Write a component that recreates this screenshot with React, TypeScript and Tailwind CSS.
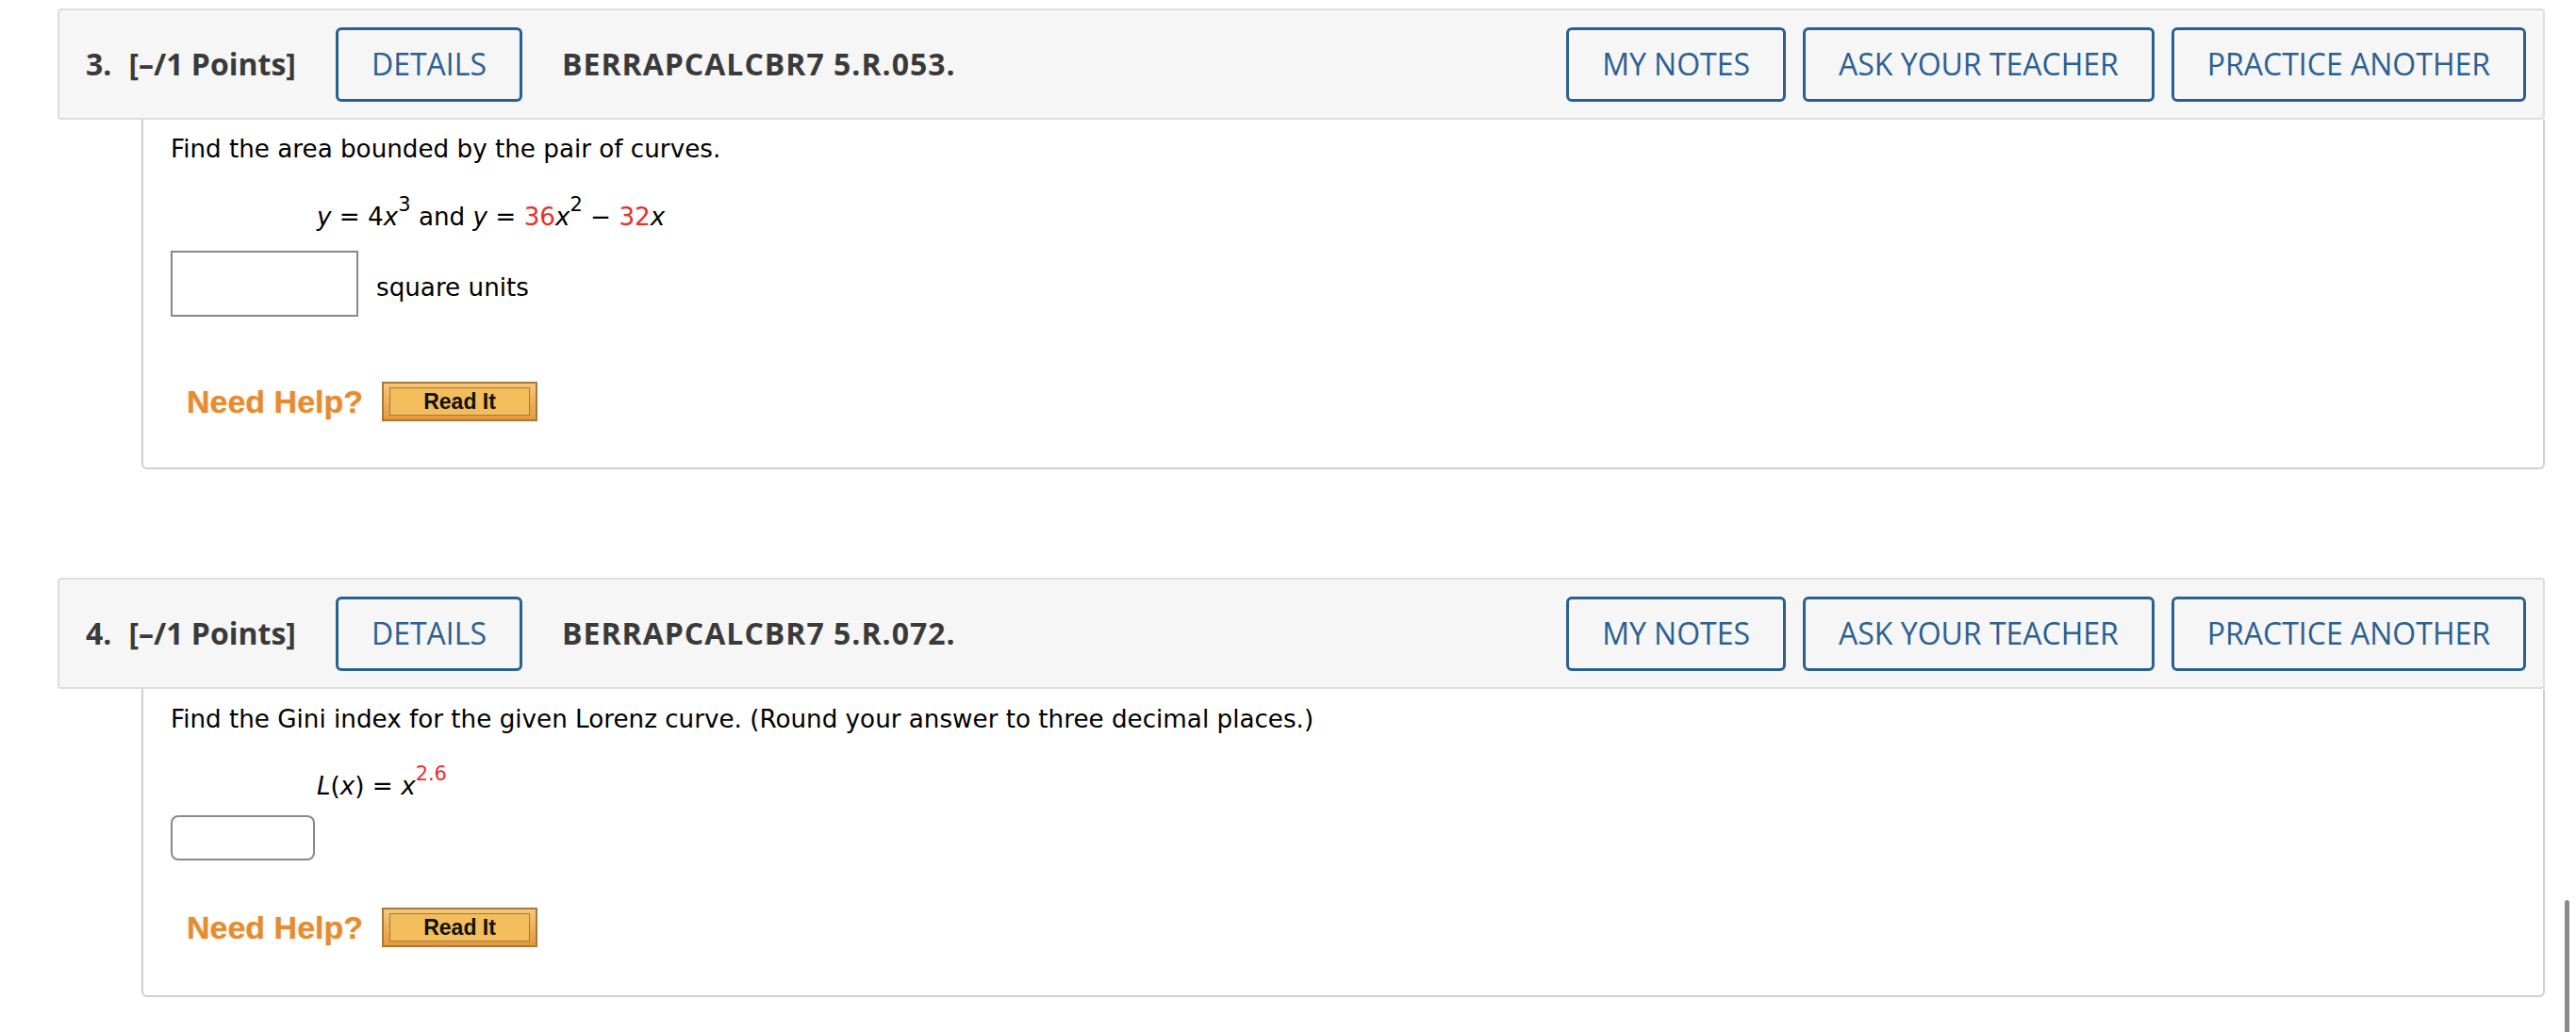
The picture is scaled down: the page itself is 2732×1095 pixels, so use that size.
import React from 'react';

const RED = 'text-[#e8302a]';

function HeaderButton({ label }: { label: string }) {
  return (
    <div className="flex h-[79px] items-center rounded-[6px] border-[3px] border-[#2b6093] bg-[#f6f6f6] px-[35px] text-[32px] leading-none text-[#2b6093]">
      {label}
    </div>
  );
}

function QuestionHeader({ num, code }: { num: string; code: string }) {
  return (
    <div className="flex h-[118px] items-center rounded-[4px] border-2 border-[#dedede] bg-[#f6f6f6] pl-[28px] pr-[18px] font-['Open_Sans',sans-serif] text-[#3a3a3a]">
      <span className="text-[32px] font-bold">{num}</span>
      <span className="ml-[18px] text-[32px] font-bold">[–/1 Points]</span>
      <div className="ml-[42px]">
        <HeaderButton label="DETAILS" />
      </div>
      <span className="ml-[42px] text-[32px] font-bold tracking-[1px]">{code}</span>
      <div className="ml-auto flex gap-[18px]">
        <HeaderButton label="MY NOTES" />
        <HeaderButton label="ASK YOUR TEACHER" />
        <HeaderButton label="PRACTICE ANOTHER" />
      </div>
    </div>
  );
}

function ReadIt() {
  return (
    <div className="h-[42px] w-[165px] border-2 border-[#a8773a] bg-gradient-to-b from-[#f6c77a] to-[#e49a3c] px-[6px] py-[4px]">
      <div className="flex h-full items-center justify-center border border-[#9c7a4a] bg-[#f3bd5c] font-['Liberation_Sans',Arial,sans-serif] text-[23px] font-bold text-[#111]">
        Read It
      </div>
    </div>
  );
}

function NeedHelp() {
  return (
    <div className="flex items-center pl-[17px]">
      <span className="font-['Liberation_Sans',Arial,sans-serif] text-[34px] font-bold text-[#e58c2f] [text-shadow:0_0_2px_rgba(229,140,47,0.5)]">
        Need Help?
      </span>
      <div className="ml-[20px]">
        <ReadIt />
      </div>
    </div>
  );
}

function V({ children }: { children: React.ReactNode }) {
  return <i>{children}</i>;
}

export default function App() {
  return (
    <div className="relative h-[1095px] w-[2732px] overflow-hidden bg-white font-['DejaVu_Sans',Verdana,sans-serif] text-[26.2px] leading-[32px] text-black">
      <div className="ml-[61px] mr-[33px] pt-[9px]">
        {/* question 3 */}
        <QuestionHeader num="3." code="BERRAPCALCBR7 5.R.053." />
        <div className="ml-[89px] rounded-b-[6px] border-x-2 border-b-2 border-[#cfcfcf] pl-[29px] pt-[15px] pb-[49px]">
          <p>Find the area bounded by the pair of curves.</p>
          <p className="mt-[40px] pl-[155px]">
            <V>y</V> = 4<V>x</V>
            <sup className="top-[-0.7em] text-[80%]">3</sup> and <V>y</V> = <span className={RED}>36</span>
            <V>x</V>
            <sup className="top-[-0.7em] text-[80%]">2</sup> − <span className={RED}>32</span>
            <V>x</V>
          </p>
          <div className="mt-[20px] flex items-start">
            <div className="h-[70px] w-[199px] border-2 border-[#888]" />
            <span className="ml-[19px] mt-[23px]">square units</span>
          </div>
          <div className="mt-[69px]">
            <NeedHelp />
          </div>
        </div>

        {/* question 4 */}
        <div className="mt-[115px]">
          <QuestionHeader num="4." code="BERRAPCALCBR7 5.R.072." />
        </div>
        <div className="ml-[89px] rounded-b-[6px] border-x-2 border-b-2 border-[#cfcfcf] pl-[29px] pt-[16px] pb-[51px]">
          <p>Find the Gini index for the given Lorenz curve. (Round your answer to three decimal places.)</p>
          <p className="mt-[39px] pl-[155px]">
            <V>L</V>(<V>x</V>) = <V>x</V>
            <sup className={`top-[-0.7em] text-[80%] ${RED}`}>2.6</sup>
          </p>
          <div className="mt-[15px] h-[48px] w-[153px] rounded-[8px] border-2 border-[#8a8a8a]" />
          <div className="mt-[50px]">
            <NeedHelp />
          </div>
        </div>
      </div>

      {/* scrollbar thumb */}
      <div className="absolute left-[2720px] top-[955px] h-[160px] w-[5px] rounded-full bg-[#8c8c8c]" />
    </div>
  );
}
